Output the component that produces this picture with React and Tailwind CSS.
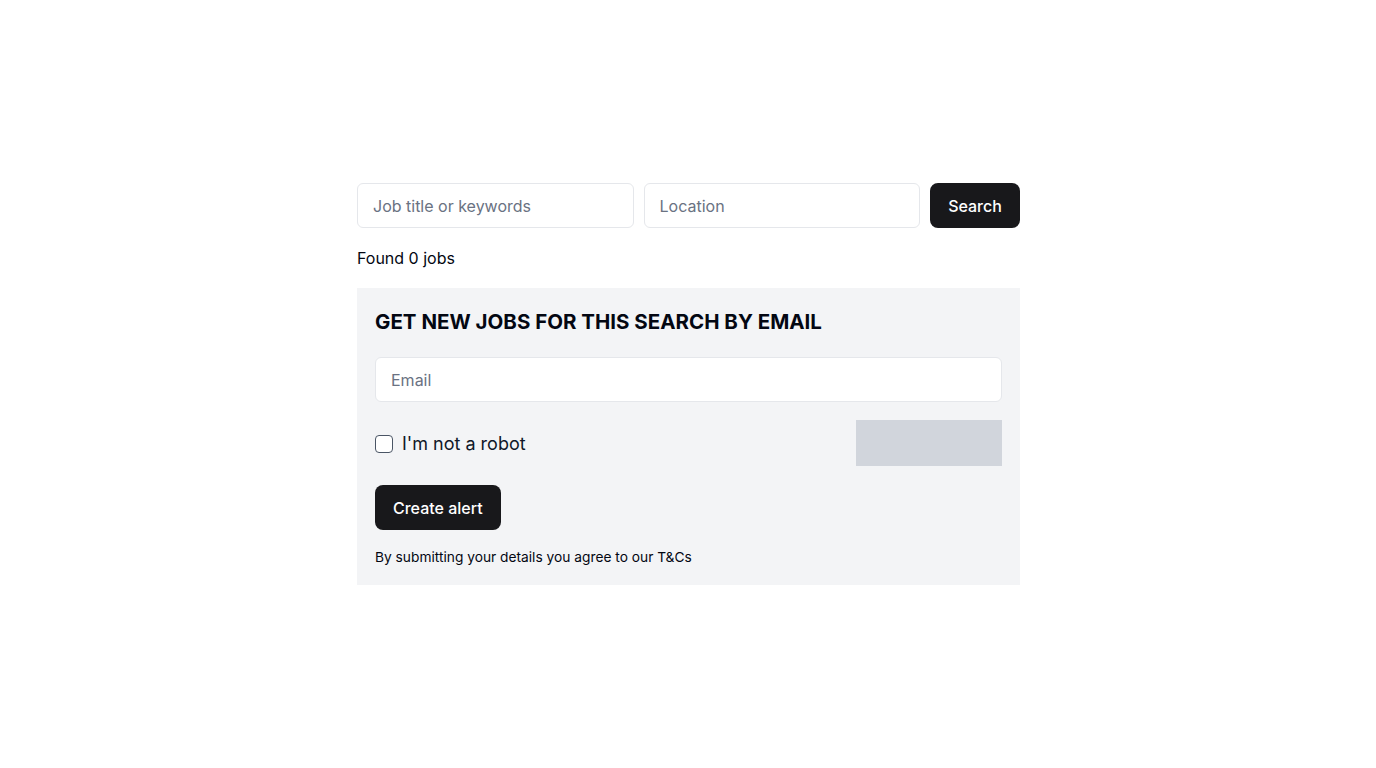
import React from "react";

const inputCls =
  "h-[45px] w-full rounded-md border border-gray-200 bg-white px-[15px] text-base text-gray-900 placeholder:text-gray-500 outline-none";

const App = () => {
  return (
    <div
      className="min-h-screen flex items-center justify-center bg-white text-gray-950"
      style={{ fontFamily: "Inter, 'Noto Sans', sans-serif" }}
    >
      <div className="w-[664px] pl-px">
        {/* Search bar */}
        <div className="flex items-center gap-2.5">
          <input className={inputCls} placeholder="Job title or keywords" />
          <input className={inputCls} placeholder="Location" />
          <button className="h-[45px] w-[90px] shrink-0 rounded-lg bg-zinc-900 text-base font-medium text-white">
            Search
          </button>
        </div>

        <p className="mt-[18px] text-base leading-6">Found 0 jobs</p>

        {/* Alert panel */}
        <div className="mt-[18px] bg-gray-100 px-[18px] pt-[18px] pb-[18px]">
          <h2 className="text-[20.5px] font-bold leading-8">
            GET NEW JOBS FOR THIS SEARCH BY EMAIL
          </h2>

          <input className={`${inputCls} mt-[19px]`} placeholder="Email" />

          <div className="mt-[18px] flex h-[46px] items-center justify-between">
            <label className="flex items-center gap-[9px] pt-px text-lg text-gray-900">
              <span className="block h-[18px] w-[18px] rounded border-[1.5px] border-gray-600 bg-white" />
              I'm not a robot
            </label>
            <div className="h-[46px] w-[146px] bg-gray-300" />
          </div>

          <button className="mt-[19px] h-[45px] rounded-lg bg-zinc-900 px-[18px] text-base font-medium text-white">
            Create alert
          </button>

          <p className="mt-[17px] text-[13.75px] leading-5">
            By submitting your details you agree to our T&amp;Cs
          </p>
        </div>
      </div>
    </div>
  );
};

export default App;
